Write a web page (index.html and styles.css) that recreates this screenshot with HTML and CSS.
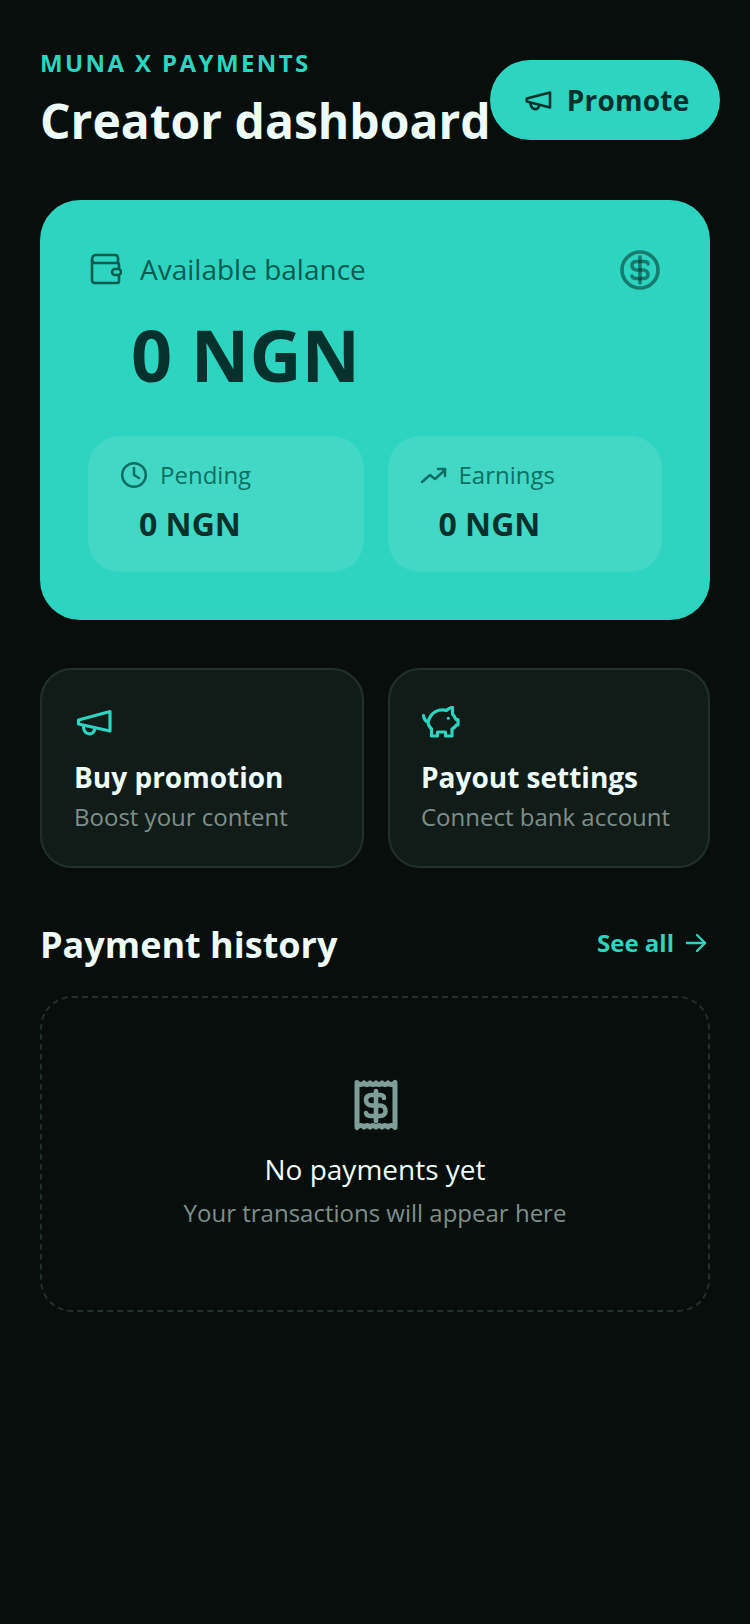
FILE: index.html
```html
<!DOCTYPE html>
<html lang="en">
<head>
  <meta charset="UTF-8" />
  <meta name="viewport" content="width=device-width, initial-scale=1.0"/>
  <title>Creator dashboard</title>
  <link rel="stylesheet" href="styles.css">
</head>
<body>
  <div class="page">
    <!-- Header -->
    <header class="header">
      <div class="header-text">
        <p class="eyebrow">MUNA X PAYMENTS</p>
        <h1>Creator dashboard</h1>
      </div>
      <button class="promote-btn">
        <svg class="promote-icon" viewBox="0 0 40 32" fill="none" stroke="currentColor" stroke-width="3.4" stroke-linecap="round" stroke-linejoin="round">
          <path d="M36 6 L5 14 V18 L36 26 Z"/>
          <path d="M10 21 C11 29 19 30 21 25"/>
        </svg>
        Promote
      </button>
    </header>

    <!-- Balance card -->
    <section class="balance-card">
      <div class="balance-top">
        <div class="balance-label">
          <svg class="wallet-icon" viewBox="0 0 32 32" fill="none" stroke="currentColor" stroke-width="2.6" stroke-linejoin="round" stroke-linecap="round">
            <path d="M2 8 C2 4 3 2 6 2 H25 C27 2 28 3 28 5 V9"/>
            <path d="M2 7 C2 9 3 10 5 10 H27 C28.500 10 29 11 29 12 V28 C29 29.500 28 30 27 30 H5 C3 30 2 29 2 27 Z"/>
            <rect x="22" y="16" width="9" height="6" rx="3" fill="#2dd4bf"/>
          </svg>
          <span>Available balance</span>
        </div>
        <svg class="dollar-icon" viewBox="0 0 40 40" fill="none" stroke="currentColor" stroke-width="3.6" stroke-linecap="round" stroke-linejoin="round">
          <circle cx="20" cy="20" r="18"/>
          <path d="M28 14 C28 12 26 11.500 24 11.500 H17 C14 11.500 12 13 12 15.500 C12 18 14 20 17 20 H23 C26 20 28 22 28 24.500 C28 27 26 28.500 23 28.500 H16 C14 28.500 12 27.500 12 26"/>
          <path d="M20 7 V33"/>
        </svg>
      </div>
      <p class="balance-amount">0 NGN</p>
      <div class="balance-stats">
        <div class="stat">
          <div class="stat-label">
            <svg class="stat-icon" viewBox="0 0 28 28" fill="none" stroke="currentColor" stroke-width="2.500" stroke-linecap="round" stroke-linejoin="round">
              <circle cx="14" cy="14" r="11.800"/>
              <path d="M14 7 V14 L19 17"/>
            </svg>
            <span>Pending</span>
          </div>
          <p class="stat-value">0 NGN</p>
        </div>
        <div class="stat">
          <div class="stat-label">
            <svg class="stat-icon stat-icon-trend" viewBox="0 0 27 28" fill="none" stroke="currentColor" stroke-width="2.500" stroke-linecap="round" stroke-linejoin="round">
              <path d="M2 21 L10 14 L15 18 L25 9"/>
              <path d="M18 8 H25 V15"/>
            </svg>
            <span>Earnings</span>
          </div>
          <p class="stat-value">0 NGN</p>
        </div>
      </div>
    </section>

    <!-- Quick actions -->
    <section class="actions">
      <div class="action-card">
        <svg class="action-icon" viewBox="0 0 40 32" fill="none" stroke="currentColor" stroke-width="3.2" stroke-linecap="round" stroke-linejoin="round">
          <path d="M36 5.500 L4.500 14 V18 L36 25 Z"/>
          <path d="M9.500 21 C10 29 19 30 20.500 24"/>
        </svg>
        <h3>Buy promotion</h3>
        <p>Boost your content</p>
      </div>
      <div class="action-card">
        <svg class="action-icon" viewBox="0 0 40 32" fill="none" stroke="currentColor" stroke-width="3.2" stroke-linecap="round" stroke-linejoin="round">
          <path d="M2.500 9.500 C3 13 5 15.500 7 16 C7 19 8.500 21 10.500 23 V30 H16.500 V26 H24.500 V30 H31 V23 C33 22 34.500 20.500 35.500 19 H37 V13.500 H35 C34 11 33 9.500 31.500 8 V1.500 C29 1.500 27.500 3 25.500 4.500 C19 2.500 10 5 7 16"/>
          <circle cx="27.300" cy="12.300" r="1.500" fill="currentColor" stroke="none"/>
        </svg>
        <h3>Payout settings</h3>
        <p>Connect bank account</p>
      </div>
    </section>

    <!-- Payment history -->
    <div class="history-head">
      <h2>Payment history</h2>
      <a class="see-all" href="#">
        See all
        <svg class="arrow-icon" viewBox="0 0 24 24" fill="none" stroke="currentColor" stroke-width="2.400" stroke-linecap="round" stroke-linejoin="round">
          <path d="M3 12 H21"/>
          <path d="M13 4 L21 12 L13 20"/>
        </svg>
      </a>
    </div>

    <div class="empty-box">
      <svg class="receipt-icon" viewBox="0 0 44 52" fill="none" stroke="currentColor" stroke-width="5" stroke-linejoin="round">
        <path d="M3 3.500 C5 6 8 6 10 4 C12 6 14 6 16 4 C18 6 20 6 22 4 C24 6 26 6 28 4 C30 6 32 6 34 4 C36 6 39 6 41 3.500 V48.500 C39 46 36 46 34 48 C32 46 30 46 28 48 C26 46 24 46 22 48 C20 46 18 46 16 48 C14 46 12 46 10 48 C8 46 5 46 3 48.500 Z"/>
        <path stroke-linecap="round" stroke-width="4.600" d="M30 19 C30 17 28 16 26 16 H18 C14 16 12 18 12 21 C12 24 14 26.500 18 26.500 H26 C29.500 26.500 31.500 29 31.500 32 C31.500 35 29.500 37 26 37 H17 C14.500 37 12.500 36 12 34"/>
        <path stroke-linecap="round" stroke-width="4.600" d="M22 12 V42"/>
      </svg>
      <p class="empty-title">No payments yet</p>
      <p class="empty-sub">Your transactions will appear here</p>
    </div>
  </div>
</body>
</html>
```

FILE: styles.css
```css
* {
  box-sizing: border-box;
}

body {
  margin: 0;
  background: #070e0c;
  color: #effdf9;
  font-family: "Open Sans", sans-serif;
}

h1, h2, h3, p {
  margin: 0;
}

.page {
  padding: 47px 40px 0;
  min-height: 1624px;
}

.header {
  display: flex;
  justify-content: space-between;
  align-items: flex-start;
  height: 106px;
  margin-bottom: 47px;
}

.header-text {
  flex-shrink: 0;
}

.eyebrow {
  color: #2dd4bf;
  font-size: 24px;
  line-height: 32px;
  font-weight: 700;
  letter-spacing: 2.4px;
}

h1 {
  margin-top: 10px;
  font-size: 48px;
  line-height: 64px;
  font-weight: 700;
}

.promote-btn {
  flex-shrink: 0;
  display: flex;
  align-items: center;
  justify-content: center;
  gap: 14px;
  width: 230px;
  height: 80px;
  margin-top: 13px;
  margin-left: -1px;
  padding: 0 0 0 3px;
  border: none;
  border-radius: 40px;
  background: #2dd4bf;
  color: #06312c;
  font-family: inherit;
  font-size: 28px;
  font-weight: 700;
  letter-spacing: 0.2px;
}

.promote-icon {
  width: 30px;
  height: 24px;
}

.balance-card {
  background: #2dd4bf;
  border-radius: 40px;
  height: 420px;
  padding: 50px 48px 48px;
}

.balance-top {
  display: flex;
  justify-content: space-between;
  align-items: center;
  height: 40px;
}

.balance-label {
  display: flex;
  align-items: center;
  gap: 18px;
  margin-top: -2px;
  color: #0b5a50;
  font-size: 28px;
}

.wallet-icon {
  width: 32px;
  height: 32px;
  margin-left: 2px;
}

.dollar-icon {
  width: 40px;
  height: 40px;
  margin-right: 2px;
  color: #06312c;
  stroke-opacity: 0.55;
}

.balance-amount {
  margin-top: 15px;
  padding-left: 43px;
  color: #06312c;
  font-size: 72px;
  line-height: 98px;
  font-weight: 700;
}

.balance-stats {
  display: grid;
  grid-template-columns: 275.5px 274.5px;
  gap: 24px;
  margin-top: 33px;
}

.stat {
  height: 136px;
  padding: 23px 32px;
  background: rgba(255, 255, 255, 0.1);
  border-radius: 32px;
}

.stat-label {
  display: flex;
  align-items: center;
  gap: 12px;
  color: #0d6f63;
  font-size: 24px;
  line-height: 32px;
}

.stat-icon {
  width: 28px;
  height: 28px;
}

.stat-icon-trend {
  width: 27px;
}

.stat-value {
  margin-top: 11px;
  padding-left: 19px;
  color: #06312c;
  font-size: 32px;
  line-height: 44px;
  font-weight: 700;
}

.actions {
  display: grid;
  grid-template-columns: 324px 322px;
  gap: 24px;
  margin-top: 48px;
}

.action-card {
  height: 200px;
  padding: 36px 32px 0;
  background: #111c19;
  border: 2px solid #21302c;
  border-radius: 32px;
}

.action-card + .action-card {
  padding-left: 31px;
}

.action-icon {
  display: block;
  width: 40px;
  height: 32px;
  color: #2dd4bf;
}

.action-card h3 {
  margin-top: 20px;
  font-size: 28px;
  line-height: 38px;
  font-weight: 700;
}

.action-card p {
  margin-top: 5px;
  color: #7e8f8b;
  font-size: 24px;
  line-height: 32px;
}

.history-head {
  display: flex;
  justify-content: space-between;
  align-items: center;
  height: 56px;
  margin-top: 49px;
}

h2 {
  font-size: 36px;
  line-height: 48px;
  font-weight: 700;
}

.see-all {
  display: flex;
  align-items: center;
  gap: 10px;
  padding-right: 2px;
  padding-bottom: 5px;
  color: #2dd4bf;
  font-size: 24px;
  font-weight: 700;
  text-decoration: none;
}

.arrow-icon {
  width: 24px;
  height: 24px;
}

.empty-box {
  display: flex;
  flex-direction: column;
  align-items: center;
  height: 316px;
  margin-top: 23px;
  padding-top: 81px;
  border: 2px dashed #21302c;
  border-radius: 32px;
}

.receipt-icon {
  flex-shrink: 0;
  width: 44px;
  height: 52px;
  margin-left: 2px;
  color: #7e9e97;
}

.empty-title {
  margin-top: 19px;
  font-size: 28px;
  line-height: 38px;
}

.empty-sub {
  margin-top: 9px;
  color: #7e8f8b;
  font-size: 24px;
  line-height: 32px;
}
```
